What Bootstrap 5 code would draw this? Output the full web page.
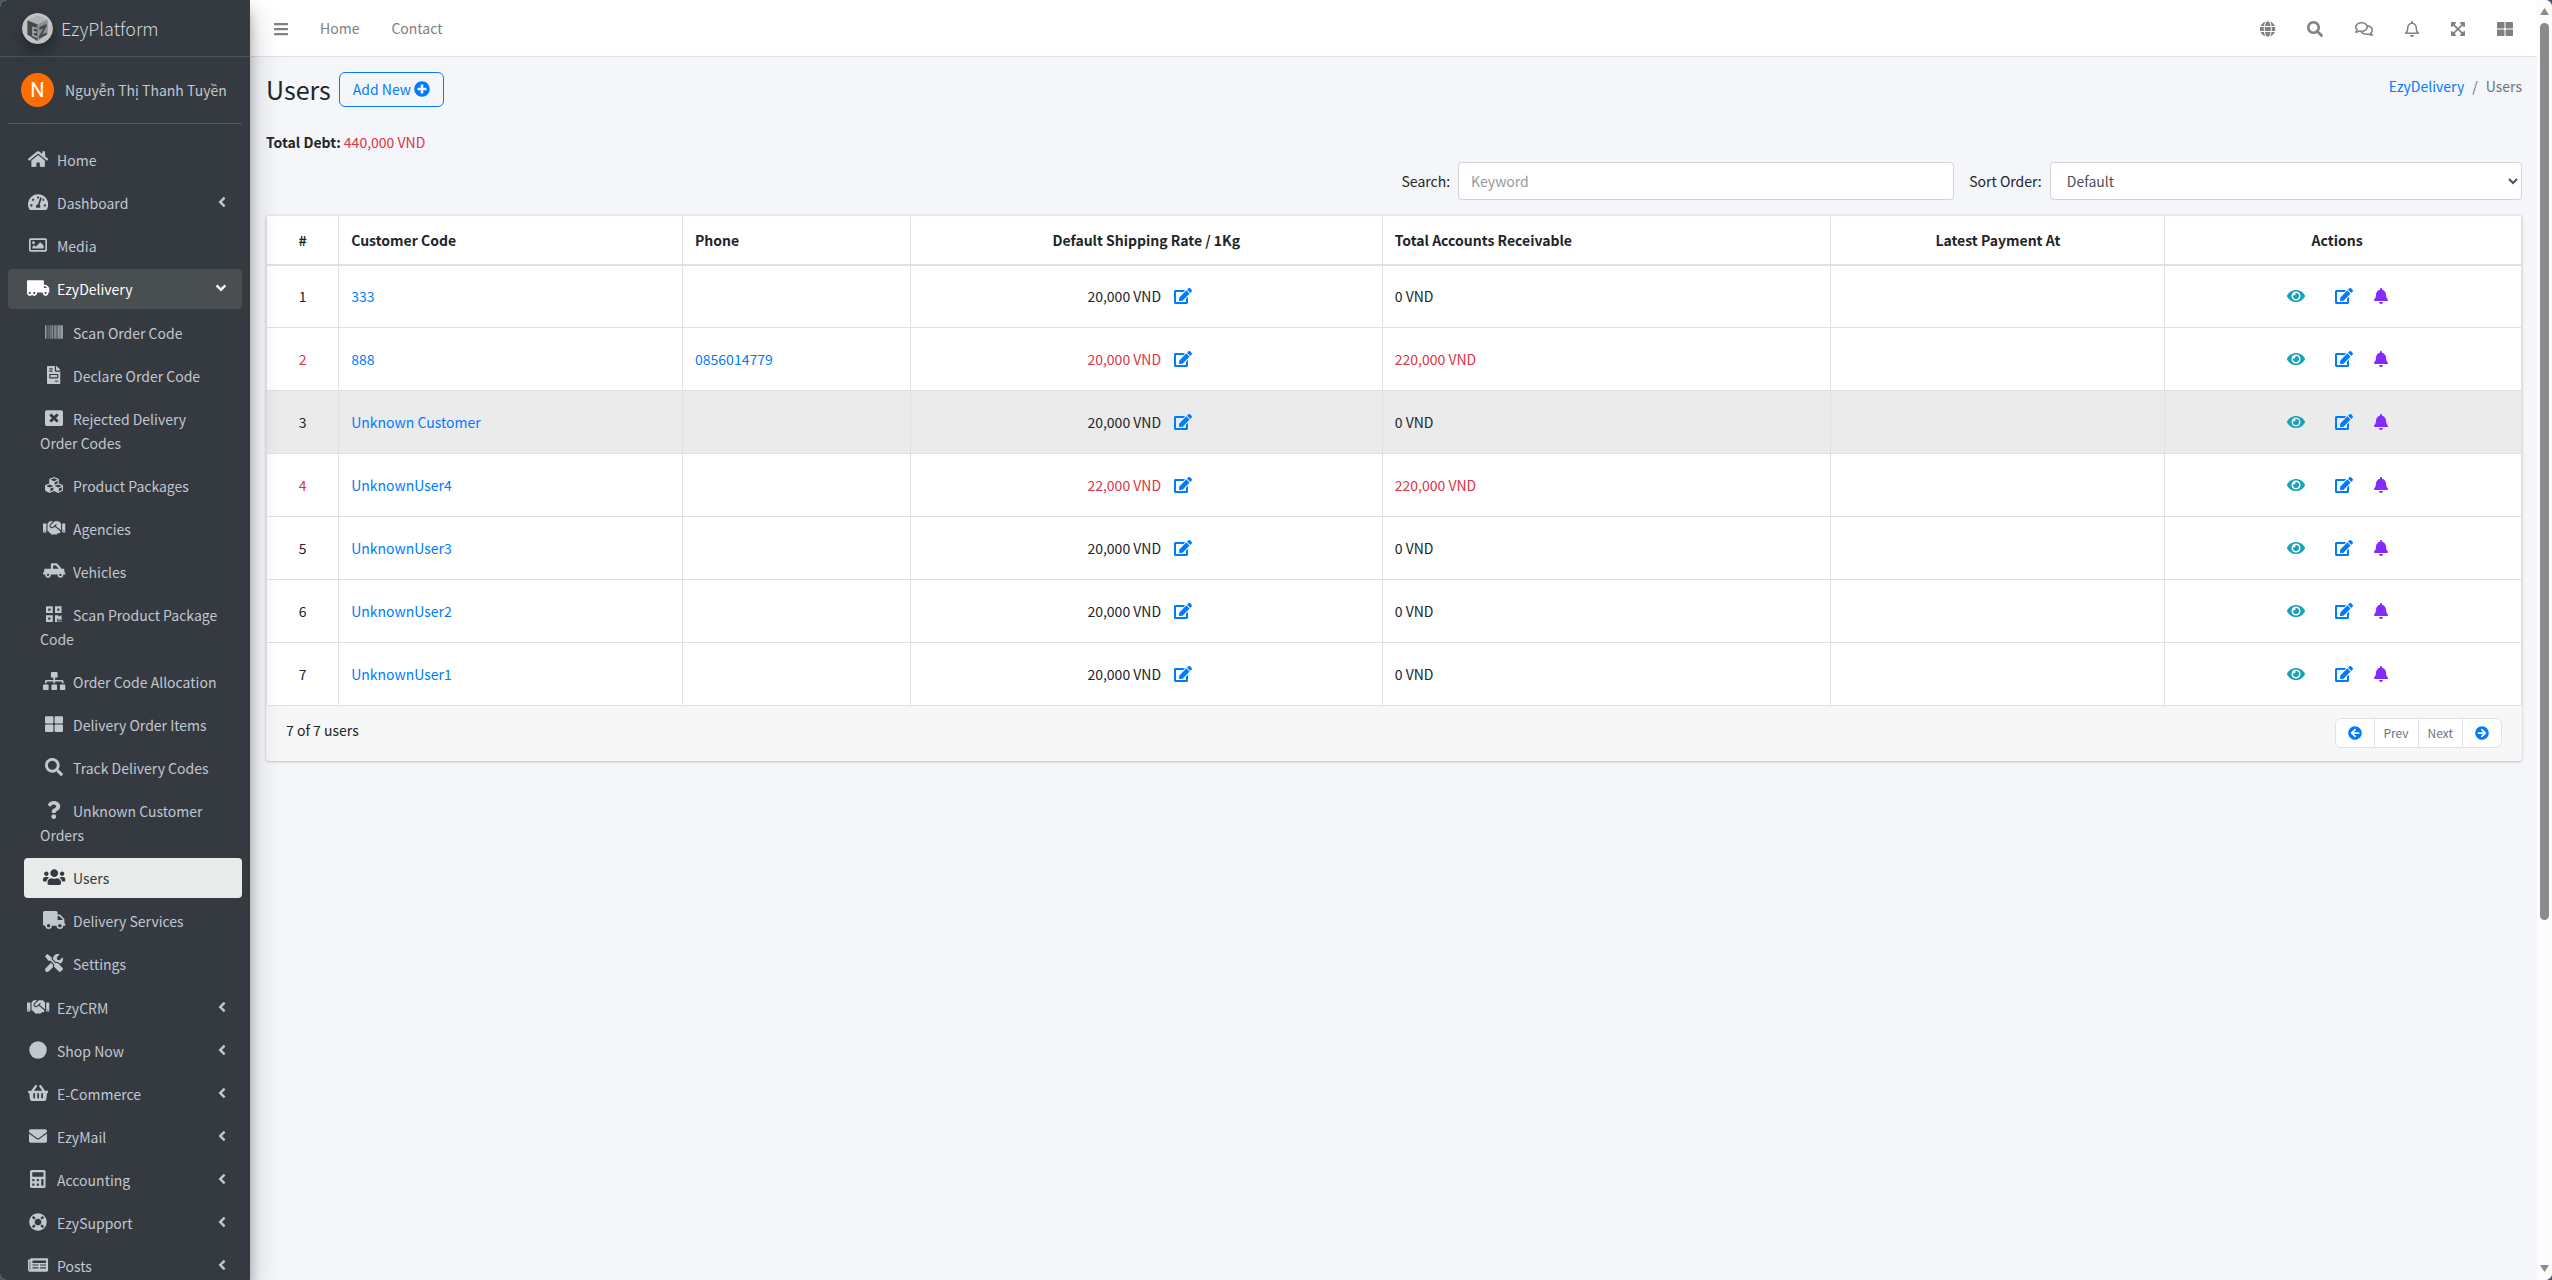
<!DOCTYPE html>
<html lang="en">
<head>
<meta charset="utf-8">
<meta name="viewport" content="width=device-width, initial-scale=1">
<title>EzyPlatform | Users</title>
<link href="https://cdn.jsdelivr.net/npm/bootstrap@5.3.0/dist/css/bootstrap.min.css" rel="stylesheet">
<style>
:root{--ezy-blue:#007bff;--ezy-red:#dc3545;--ezy-line:#dee2e6}
body{font-family:"Noto Sans CJK SC","Noto Sans",sans-serif;font-size:14px;line-height:24px;color:#212529;background:#44566c}
a{color:var(--ezy-blue);text-decoration:none}
.ico{fill:currentColor;height:16px;width:auto;overflow:visible;vertical-align:-2px}
.shell{background:#f4f6f9;border-radius:7px}
/* sidebar */
.side{width:250px;background:#343a40;color:#c2c7d0;z-index:5;box-shadow:0 14px 28px rgba(0,0,0,.25),0 10px 10px rgba(0,0,0,.22)}
.side a{color:#c2c7d0}
.side .brand-row{height:57px;border-bottom:1px solid #4b545c;font-size:18px;font-weight:300;padding:0 22px}
.side .brand-row a{color:#d0d4d9}
.brand-logo{width:31px;height:31px;border-radius:50%;margin-right:8px;box-shadow:0 8px 14px rgba(0,0,0,.3)}
.who{margin:0 8px;padding:16px 0 16px 13px;height:67px;border-bottom:1px solid #4f5962}
.avatar{width:33px;height:34px;border-radius:50%;background:#ff6d00;color:#fff;font:20px/34px Roboto,sans-serif;margin-right:11px}
.menu{padding:16px 8px 0}
.menu a{padding:8px 16px;margin-bottom:3px;border-radius:4px}
.menu .glyph{display:inline-block;width:26px;margin:0 6px 0 1px;text-align:center}
.menu .glyph .ico{height:18px;vertical-align:-2px}
.menu .arrow{height:16px;margin-bottom:2px}
.menu .opened{background:#494e51;color:#fff}
.menu .sub{padding:1px 0 1px 16px}
.menu .sub .chosen{background:#e9ebea;color:#343a40}
/* top bar */
.topbar{height:57px;background:#fff;border-bottom:1px solid var(--ezy-line);padding:0 8px}
.topbar a,.topbar button{color:#808080;padding:0 16px;background:none;border:0}
.topbar .ico{vertical-align:-3px}
/* content */
.page{padding:15px 15px 0 16px}
.page h1{font-size:25px;line-height:34px;font-weight:400;margin:0 8px 0 0}
.btn-add{color:var(--ezy-blue);border:1px solid var(--ezy-blue);padding:4px 13px;font-size:14px;line-height:25px;height:35px}
.crumbs{--bs-breadcrumb-divider-color:#6c757d;--bs-breadcrumb-item-active-color:#6c757d;padding-top:2px}
.debt{margin:23px 0 8px}
.red{color:var(--ezy-red)}
.filters{--bs-gutter-x:15px}
.filters .form-control,.filters select{height:38px;font-size:14px;line-height:24px;border:1px solid #ced4da;border-radius:4px;color:#495057;background-color:#fff}
.filters select{flex:1 1 0;min-width:0;padding:0 12px}
.filters .form-control::placeholder{color:#939ba2}
.panel{margin-top:15px;background:#fff;border-radius:4px;box-shadow:0 0 1px rgba(0,0,0,.125),0 1px 3px rgba(0,0,0,.2)}
.grid-users{table-layout:fixed;border-collapse:collapse;width:100%}
.grid-users th,.grid-users td{border:1px solid var(--ezy-line);padding:0 12px}
.grid-users tr>:last-child{padding-right:24px}
.grid-users thead th{height:49px;border-top-color:#e7e9ec;border-bottom:2px solid var(--ezy-line)}
.grid-users td{height:63px}
.grid-users .hovered td{background:#ebebeb}
.c1{width:3.2%}.c2{width:15.25%}.c3{width:10.1%}.c4{width:20.93%}.c5{width:19.9%}.c6{width:14.8%}
.act{background:none;border:0;padding:0 13px;color:var(--ezy-blue)}
.act-eye{color:#17a2b8;margin-right:4px}
.act-bell{color:#832bff;padding:0 13px 0 8px}
.foot{background:#f7f7f7;padding:12px 20px;height:55px;border-radius:0 0 4px 4px}
.pager .page-link{height:30px;padding:4px 9px;font-size:12px;line-height:20px;color:#6c757d;background:#fff;border:1px solid var(--ezy-line)}
.pager .page-link.end{padding:4px 12px;color:var(--ezy-blue)}
.pager .ico{height:14px;vertical-align:-2px}
/* window scroll bar */
.bar{width:15px;background:#fcfcfc;padding:8px 3px}
.bar svg{width:9px;height:7px;fill:#8b8b8b}
.thumb{width:9px;height:71%;margin:8px 0 auto;background:#8b8b8b;border-radius:5px}
</style>
</head>
<body>
<svg class="d-none" xmlns="http://www.w3.org/2000/svg">
<symbol id="home" viewBox="0 0 576 512"><path d="M280.370 148.260L96 300.110V464a16 16 0 0 0 16 16l112.060-.29a16 16 0 0 0 15.920-16V368a16 16 0 0 1 16-16h64a16 16 0 0 1 16 16v95.640a16 16 0 0 0 16 16.050L464 480a16 16 0 0 0 16-16V300L295.670 148.260a12.190 12.190 0 0 0-15.300 0zM571.600 251.470L488 182.560V44.050a12 12 0 0 0-12-12h-56a12 12 0 0 0-12 12v72.610L318.470 43a48 48 0 0 0-61 0L4.340 251.470a12 12 0 0 0-1.600 16.900l25.500 31A12 12 0 0 0 45.150 301l235.220-193.740a12.190 12.190 0 0 1 15.300 0L530.900 301a12 12 0 0 0 16.900-1.600l25.500-31a12 12 0 0 0-1.700-16.930z"/></symbol>
<symbol id="gauge" viewBox="0 0 576 512"><path d="M288 32C128.940 32 0 160.940 0 320c0 52.800 14.250 102.260 39.060 144.800 5.610 9.620 16.300 15.200 27.440 15.200h443c11.140 0 21.830-5.580 27.440-15.200C561.750 422.260 576 372.800 576 320c0-159.060-128.940-288-288-288zm0 64c14.710 0 26.580 10.130 30.320 23.650-1.110 2.260-2.640 4.230-3.450 6.670l-9.220 27.670c-5.130 3.490-10.970 6.010-17.640 6.010-17.670 0-32-14.330-32-32S270.330 96 288 96zM96 384c-17.670 0-32-14.330-32-32s14.330-32 32-32 32 14.330 32 32-14.330 32-32 32zm48-160c-17.670 0-32-14.330-32-32s14.330-32 32-32 32 14.330 32 32-14.330 32-32 32zm246.770-72.410l-61.330 184C343.130 347.330 352 364.540 352 384c0 11.720-3.380 22.550-8.880 32H232.880c-5.500-9.450-8.880-20.280-8.880-32 0-33.940 26.500-61.430 59.900-63.590l61.340-184.010c4.170-12.560 17.730-19.450 30.360-15.170 12.570 4.190 19.350 17.790 15.170 30.360zm14.660 57.200l15.520-46.550c3.470-1.290 7.130-2.230 11.050-2.230 17.670 0 32 14.330 32 32s-14.330 32-32 32c-11.380-.01-20.890-6.280-26.570-15.220zM480 384c-17.670 0-32-14.330-32-32s14.330-32 32-32 32 14.330 32 32-14.330 32-32 32z"/></symbol>
<symbol id="image" viewBox="0 0 512 512"><path d="M464 64H48C21.490 64 0 85.490 0 112v288c0 26.510 21.490 48 48 48h416c26.510 0 48-21.490 48-48V112c0-26.510-21.490-48-48-48zm-6 336H54a6 6 0 0 1-6-6V118a6 6 0 0 1 6-6h404a6 6 0 0 1 6 6v276a6 6 0 0 1-6 6zM128 152c-22.091 0-40 17.909-40 40s17.909 40 40 40 40-17.909 40-40-17.909-40-40-40zM96 352h320v-80l-87.515-87.515c-4.686-4.686-12.284-4.686-16.971 0L192 304l-39.515-39.515c-4.686-4.686-12.284-4.686-16.971 0L96 304v48z"/></symbol>
<symbol id="lorry" viewBox="0 0 640 512"><path fill-rule="evenodd" d="M621.300 237.300l-58.500-58.500c-12-12-28.300-18.700-45.300-18.700H480V64c0-17.700-14.300-32-32-32H32C14.300 32 0 46.300 0 64v336c0 44.200 35.800 80 80 80 26.300 0 49.400-12.900 64-32.400 14.600 19.600 37.700 32.400 64 32.400 44.200 0 80-35.800 80-80 0-5.500-.6-10.800-1.600-16h163.200c-1.100 5.200-1.600 10.500-1.600 16 0 44.200 35.800 80 80 80s80-35.800 80-80c0-5.500-.6-10.800-1.600-16H624c8.800 0 16-7.200 16-16v-85.500c0-17-6.700-33.200-18.700-45.200zM80 432c-17.600 0-32-14.400-32-32s14.400-32 32-32 32 14.400 32 32-14.400 32-32 32zm128 0c-17.600 0-32-14.400-32-32s14.400-32 32-32 32 14.400 32 32-14.400 32-32 32zm272-224h37.500c4.300 0 8.300 1.700 11.300 4.700l43.300 43.300H480v-48zm48 224c-17.600 0-32-14.400-32-32s14.400-32 32-32 32 14.400 32 32-14.400 32-32 32z"/></symbol>
<symbol id="truck" viewBox="0 0 640 512"><path d="M624 352h-16V243.900c0-12.700-5.100-24.900-14.100-33.900L494 110.100c-9-9-21.200-14.100-33.900-14.100H416V48c0-26.500-21.500-48-48-48H48C21.500 0 0 21.500 0 48v320c0 26.500 21.500 48 48 48h16c0 53 43 96 96 96s96-43 96-96h128c0 53 43 96 96 96s96-43 96-96h48c8.800 0 16-7.200 16-16v-32c0-8.800-7.200-16-16-16zM160 464c-26.500 0-48-21.500-48-48s21.500-48 48-48 48 21.500 48 48-21.500 48-48 48zm320 0c-26.500 0-48-21.500-48-48s21.500-48 48-48 48 21.500 48 48-21.500 48-48 48zm80-208H416V144h44.100l99.900 99.900V256z"/></symbol>
<symbol id="barcode" viewBox="0 0 512 512"><path d="M0 448V64h18v384H0zm26.857-.273V64H36v383.727h-9.143zm27.143 0V64h8.857v383.727H54zm44.857 0V64h8.857v383.727h-8.857zm36 0V64h17.714v383.727h-17.714zm44.857 0V64h8.857v383.727h-8.857zm18 0V64h8.857v383.727h-8.857zm18 0V64h8.857v383.727h-8.857zm35.715 0V64h18v383.727h-18zm44.857 0V64h18v383.727h-18zm35.999 0V64h18.001v383.727h-18.001zm36.001 0V64h18.001v383.727h-18.001zm26.857 0V64h18v383.727h-18zm45.143 0V64h26.857v383.727h-26.857zm35.714 0V64h9.143v383.727H476zm18 .273V64h18v384h-18z"/></symbol>
<symbol id="invoice" viewBox="0 0 384 512"><path d="M288 256H96v64h192v-64zm89-151L279.100 7c-4.500-4.500-10.600-7-17-7H256v128h128v-6.100c0-6.300-2.500-12.400-7-16.900zm-153 31V0H24C10.700 0 0 10.700 0 24v464c0 13.300 10.700 24 24 24h336c13.300 0 24-10.700 24-24V160H248c-13.200 0-24-10.800-24-24zM64 72c0-4.420 3.580-8 8-8h80c4.420 0 8 3.580 8 8v16c0 4.420-3.580 8-8 8H72c-4.420 0-8-3.580-8-8V72zm0 64c0-4.420 3.580-8 8-8h80c4.420 0 8 3.580 8 8v16c0 4.420-3.580 8-8 8H72c-4.420 0-8-3.580-8-8v-16zm256 304c0 4.420-3.580 8-8 8h-80c-4.420 0-8-3.580-8-8v-16c0-4.420 3.580-8 8-8h80c4.420 0 8 3.580 8 8v16zm0-200v96c0 8.840-7.160 16-16 16H80c-8.840 0-16-7.160-16-16v-96c0-8.840 7.160-16 16-16h224c8.840 0 16 7.160 16 16z"/></symbol>
<symbol id="reject" viewBox="0 0 512 512"><path d="M464 32H48C21.500 32 0 53.500 0 80v352c0 26.500 21.500 48 48 48h416c26.500 0 48-21.500 48-48V80c0-26.500-21.500-48-48-48zm-83.600 290.500c4.800 4.800 4.800 12.600 0 17.400l-40.500 40.500c-4.800 4.800-12.600 4.800-17.400 0L256 313.300l-66.500 67.100c-4.800 4.800-12.600 4.800-17.400 0l-40.500-40.500c-4.800-4.800-4.800-12.600 0-17.400l67.100-66.500-67.100-66.500c-4.800-4.800-4.800-12.600 0-17.400l40.500-40.500c4.800-4.800 12.600-4.800 17.400 0l66.500 67.100 66.500-67.100c4.800-4.800 12.600-4.800 17.400 0l40.500 40.500c4.800 4.800 4.800 12.600 0 17.400L313.300 256l67.100 66.500z"/></symbol>
<symbol id="cubes" viewBox="0 0 512 512"><path d="M488.600 250.200L392 214V105.500c0-15-9.300-28.400-23.400-33.700l-100-37.500c-8.100-3.100-17.100-3.100-25.300 0l-100 37.500c-14.100 5.300-23.400 18.700-23.400 33.700V214l-96.600 36.200C9.300 255.500 0 268.900 0 283.900V394c0 13.600 7.700 26.100 19.900 32.200l100 50c10.100 5.100 22.100 5.100 32.200 0l103.900-52 103.900 52c10.100 5.100 22.100 5.100 32.200 0l100-50c12.200-6.100 19.900-18.600 19.900-32.200V283.900c0-15-9.300-28.400-23.400-33.700zM358 214.800l-85 31.900v-68.200l85-37v73.300zM154 104.100l102-38.200 102 38.200v.6l-102 41.400-102-41.400v-.6zm84 291.100l-85 42.500v-79.100l85-38.800v75.400zm0-112l-102 41.400-102-41.400v-.6l102-38.200 102 38.200v.6zm240 112l-85 42.500v-79.100l85-38.800v75.400zm0-112l-102 41.400-102-41.400v-.6l102-38.200 102 38.200v.6z"/></symbol>
<symbol id="shake" viewBox="0 0 640 512"><path d="M434.700 64h-85.900c-8 0-15.700 3-21.600 8.400l-98.300 90c-.1.100-.2.300-.3.400-16.600 15.600-16.300 40.500-2.100 56 12.700 13.900 39.400 17.600 56.100 2.700.1-.1.300-.1.400-.2l79.900-73.200c6.500-5.900 16.700-5.500 22.600 1 6 6.500 5.500 16.600-1 22.600l-26.100 23.900L504 313.800c2.900 2.400 5.500 5 7.900 7.700V128l-54.600-54.600c-5.900-6-14.100-9.400-22.600-9.400zM544 128.200v223.900c0 17.700 14.300 32 32 32h64V128.200h-96zm48 223.900c-8.800 0-16-7.200-16-16s7.200-16 16-16 16 7.200 16 16-7.200 16-16 16zM0 384h64c17.700 0 32-14.300 32-32V128.200H0V384zm48-63.900c8.800 0 16 7.200 16 16s-7.200 16-16 16-16-7.200-16-16c0-8.900 7.200-16 16-16zm435.900 18.600L334.600 217.500l-30 27.500c-29.700 27.100-75.200 24.500-101.700-4.400-26.900-29.400-24.800-74.900 4.400-101.700L289.100 64h-83.800c-8.500 0-16.600 3.400-22.600 9.400L128 128v223.900h18.300l90.500 81.900c27.400 22.300 67.700 18.100 90-9.300l.2-.2 17.900 15.500c15.900 13 39.400 10.500 52.300-5.400l31.400-38.600 5.400 4.400c13.700 11.100 33.900 9.100 45-4.700l9.500-11.700c11.200-13.800 9.100-33.900-4.600-45.100z"/></symbol>
<symbol id="pickup" viewBox="0 0 640 512"><path d="M624 288h-16v-64c0-17.700-14.300-32-32-32h-48L419.200 56c-12.100-15.200-30.500-24-50-24H256c-17.700 0-32 14.300-32 32v128H64c-17.700 0-32 14.300-32 32v64H16c-8.800 0-16 7.200-16 16v32c0 8.800 7.200 16 16 16h49.600c-1 5.200-1.600 10.500-1.600 16 0 44.200 35.800 80 80 80s80-35.800 80-80c0-5.500-.6-10.800-1.600-16h195.200c-1 5.200-1.600 10.500-1.600 16 0 44.200 35.800 80 80 80s80-35.800 80-80c0-5.500-.6-10.800-1.600-16H624c8.800 0 16-7.200 16-16v-32c0-8.800-7.200-16-16-16zM288 96h81.200l76.800 96H288V96zM144 400c-17.600 0-32-14.400-32-32s14.400-32 32-32 32 14.400 32 32-14.400 32-32 32zm352 0c-17.600 0-32-14.400-32-32s14.400-32 32-32 32 14.400 32 32-14.400 32-32 32z"/></symbol>
<symbol id="qr" viewBox="0 0 448 512"><path d="M0 224h192V32H0v192zM64 96h64v64H64V96zm192-64v192h192V32H256zm128 128h-64V96h64v64zM0 480h192V288H0v192zm64-128h64v64H64v-64zm352-64h32v128h-96v-32h-32v96h-64V288h96v32h64v-32zm0 160h32v32h-32v-32zm-64 0h32v32h-32v-32z"/></symbol>
<symbol id="sitemap" viewBox="0 0 640 512"><path d="M128 352H32c-17.700 0-32 14.300-32 32v96c0 17.700 14.300 32 32 32h96c17.700 0 32-14.300 32-32v-96c0-17.700-14.300-32-32-32zm-24-80h192v48h48v-48h192v48h48v-57.600c0-21.200-17.200-38.400-38.400-38.400H344v-64h40c17.700 0 32-14.300 32-32V32c0-17.700-14.300-32-32-32H256c-17.700 0-32 14.300-32 32v96c0 17.700 14.300 32 32 32h40v64H94.400C73.200 224 56 241.200 56 262.400V320h48v-48zm264 80h-96c-17.700 0-32 14.300-32 32v96c0 17.700 14.300 32 32 32h96c17.700 0 32-14.300 32-32v-96c0-17.700-14.300-32-32-32zm240 0h-96c-17.700 0-32 14.300-32 32v96c0 17.700 14.300 32 32 32h96c17.700 0 32-14.300 32-32v-96c0-17.700-14.300-32-32-32z"/></symbol>
<symbol id="tiles" viewBox="0 0 512 512"><path d="M296 32h192c13.255 0 24 10.745 24 24v160c0 13.255-10.745 24-24 24H296c-13.255 0-24-10.745-24-24V56c0-13.255 10.745-24 24-24zm-80 0H24C10.745 32 0 42.745 0 56v160c0 13.255 10.745 24 24 24h192c13.255 0 24-10.745 24-24V56c0-13.255-10.745-24-24-24zM0 296v160c0 13.255 10.745 24 24 24h192c13.255 0 24-10.745 24-24V296c0-13.255-10.745-24-24-24H24c-13.255 0-24 10.745-24 24zm296 184h192c13.255 0 24-10.745 24-24V296c0-13.255-10.745-24-24-24H296c-13.255 0-24 10.745-24 24v160c0 13.255 10.745 24 24 24z"/></symbol>
<symbol id="search" viewBox="0 0 512 512"><path d="M505 442.700L405.300 343c-4.500-4.500-10.600-7-17-7H372c27.600-35.300 44-79.700 44-128C416 93.100 322.900 0 208 0S0 93.100 0 208s93.100 208 208 208c48.300 0 92.700-16.400 128-44v16.300c0 6.400 2.500 12.500 7 17l99.700 99.700c9.400 9.400 24.600 9.400 33.900 0l28.300-28.300c9.400-9.400 9.400-24.600.1-34zM208 336c-70.700 0-128-57.200-128-128 0-70.700 57.200-128 128-128 70.700 0 128 57.200 128 128 0 70.700-57.200 128-128 128z"/></symbol>
<symbol id="question" viewBox="0 0 384 512"><path d="M202.021 0C122.202 0 70.503 32.703 29.914 91.026c-7.363 10.580-5.093 25.086 5.178 32.874l43.138 32.709c10.373 7.865 25.132 6.026 33.253-4.148 25.049-31.381 43.630-49.449 82.757-49.449 30.764 0 68.816 19.799 68.816 49.631 0 22.552-18.617 34.134-48.993 51.164-35.423 19.860-82.299 44.576-82.299 106.405V320c0 13.255 10.745 24 24 24h72.471c13.255 0 24-10.745 24-24v-5.773c0-42.860 125.268-44.645 125.268-160.627C377.504 66.256 286.902 0 202.021 0zM192 373.459c-38.196 0-69.271 31.075-69.271 69.271 0 38.195 31.075 69.270 69.271 69.270s69.271-31.075 69.271-69.271-31.075-69.270-69.271-69.270z"/></symbol>
<symbol id="users" viewBox="0 0 640 512"><path d="M96 224c35.300 0 64-28.700 64-64s-28.700-64-64-64-64 28.700-64 64 28.700 64 64 64zm448 0c35.300 0 64-28.700 64-64s-28.700-64-64-64-64 28.700-64 64 28.700 64 64 64zm32 32h-64c-17.600 0-33.500 7.100-45.100 18.600 40.300 22.100 68.900 62 75.100 109.400h66c17.700 0 32-14.300 32-32v-32c0-35.300-28.700-64-64-64zm-256 0c61.900 0 112-50.100 112-112S381.900 32 320 32 208 82.100 208 144s50.100 112 112 112zm76.800 32h-8.300c-20.800 10-43.900 16-68.500 16s-47.600-6-68.500-16h-8.300C179.600 288 128 339.600 128 403.200V432c0 26.500 21.500 48 48 48h288c26.500 0 48-21.500 48-48v-28.800c0-63.600-51.600-115.200-115.200-115.200zm-223.700-13.400C161.500 263.100 145.600 256 128 256H64c-35.300 0-64 28.700-64 64v32c0 17.700 14.300 32 32 32h65.900c6.300-47.400 34.900-87.300 75.200-109.400z"/></symbol>
<symbol id="tools" viewBox="0 0 512 512"><path d="M501.100 395.700L384 278.600c-23.100-23.100-57.600-27.600-85.400-13.900L192 158.100V96L64 0 0 64l96 128h62.100l106.600 106.600c-13.600 27.800-9.200 62.300 13.900 85.400l117.100 117.100c14.600 14.600 38.200 14.600 52.700 0l52.700-52.700c14.500-14.600 14.500-38.200 0-52.700zM331.700 225c28.300 0 54.900 11 74.900 31l19.400 19.400c15.800-6.900 30.800-16.500 43.800-29.500 37.100-37.100 49.700-89.300 37.900-136.700-2.200-9-13.500-12.100-20.100-5.500l-74.400 74.400-67.900-11.300L334 98.900l74.400-74.400c6.600-6.600 3.400-17.900-5.700-20.200-47.400-11.700-99.600.9-136.600 37.900-28.500 28.500-41.900 66.100-41.200 103.600l82.100 82.100c8.100-1.900 16.500-2.900 24.700-2.900zm-103.900 82l-56.700-56.700L18.700 402.800c-25 25-25 65.500 0 90.500s65.500 25 90.500 0l123.600-123.600c-7.600-19.900-9.900-41.600-5-62.700z"/></symbol>
<symbol id="dot" viewBox="0 0 512 512"><circle cx="256" cy="256" r="248"/></symbol>
<symbol id="basket" viewBox="0 0 576 512"><path d="M576 216v16c0 13.255-10.745 24-24 24h-8l-26.113 182.788C514.509 462.435 494.257 480 470.370 480H105.630c-23.887 0-44.139-17.565-47.518-41.212L32 256h-8c-13.255 0-24-10.745-24-24v-16c0-13.255 10.745-24 24-24h67.341l106.780-146.821c10.395-14.292 30.407-17.453 44.701-7.058 14.293 10.395 17.453 30.408 7.058 44.701L170.477 192h235.046L326.120 82.821c-10.395-14.292-7.234-34.306 7.059-44.701 14.291-10.395 34.306-7.235 44.701 7.058L484.659 192H552c13.255 0 24 10.745 24 24zM312 392V280c0-13.255-10.745-24-24-24s-24 10.745-24 24v112c0 13.255 10.745 24 24 24s24-10.745 24-24zm112 0V280c0-13.255-10.745-24-24-24s-24 10.745-24 24v112c0 13.255 10.745 24 24 24s24-10.745 24-24zm-224 0V280c0-13.255-10.745-24-24-24s-24 10.745-24 24v112c0 13.255 10.745 24 24 24s24-10.745 24-24z"/></symbol>
<symbol id="mail" viewBox="0 0 512 512"><path d="M502.300 190.800c3.900-3.100 9.700-.2 9.700 4.700V400c0 26.500-21.500 48-48 48H48c-26.500 0-48-21.500-48-48V195.600c0-5 5.700-7.800 9.700-4.700 22.400 17.400 52.100 39.500 154.100 113.600 21.100 15.400 56.700 47.800 92.200 47.600 35.700.3 72-32.800 92.300-47.600 102-74.100 131.600-96.300 154-113.700zM256 320c23.200.4 56.600-29.200 73.400-41.400 132.700-96.300 142.800-104.700 173.400-128.700 5.800-4.500 9.200-11.500 9.200-18.900v-19c0-26.500-21.500-48-48-48H48c-26.500 0-48 21.500-48 48v19c0 7.400 3.400 14.300 9.200 18.900 30.600 23.900 40.700 32.400 173.400 128.700 16.800 12.200 50.200 41.800 73.400 41.400z"/></symbol>
<symbol id="calc" viewBox="0 0 448 512"><path d="M400 0H48C22.400 0 0 22.400 0 48v416c0 25.600 22.400 48 48 48h352c25.600 0 48-22.400 48-48V48c0-25.600-22.400-48-48-48zM128 435.200c0 6.400-6.400 12.800-12.800 12.800H76.800c-6.400 0-12.800-6.400-12.800-12.800v-38.400c0-6.400 6.400-12.800 12.800-12.800h38.400c6.400 0 12.800 6.400 12.800 12.800v38.400zm0-128c0 6.400-6.400 12.800-12.800 12.800H76.800c-6.400 0-12.800-6.400-12.800-12.800v-38.400c0-6.400 6.400-12.800 12.800-12.800h38.400c6.400 0 12.800 6.400 12.800 12.800v38.400zm128 128c0 6.400-6.400 12.800-12.800 12.800h-38.400c-6.400 0-12.800-6.400-12.800-12.800v-38.400c0-6.400 6.400-12.800 12.800-12.800h38.400c6.400 0 12.800 6.400 12.800 12.800v38.400zm0-128c0 6.400-6.400 12.800-12.800 12.800h-38.400c-6.400 0-12.800-6.400-12.800-12.800v-38.400c0-6.400 6.400-12.800 12.800-12.800h38.400c6.400 0 12.800 6.400 12.800 12.800v38.400zm128 128c0 6.400-6.400 12.800-12.800 12.800h-38.400c-6.400 0-12.800-6.400-12.800-12.800V268.800c0-6.400 6.400-12.800 12.800-12.800h38.400c6.400 0 12.800 6.400 12.800 12.800v166.400zm0-256c0 6.400-6.400 12.800-12.800 12.800H76.800c-6.400 0-12.800-6.400-12.800-12.800V76.800C64 70.400 70.400 64 76.800 64h294.400c6.400 0 12.800 6.400 12.800 12.800v102.400z"/></symbol>
<symbol id="ring" viewBox="0 0 512 512"><path d="M256 8C119.033 8 8 119.033 8 256s111.033 248 248 248 248-111.033 248-248S392.967 8 256 8zm173.696 119.559l-63.399 63.399c-10.987-18.559-26.670-34.252-45.255-45.255l63.399-63.399a218.396 218.396 0 0 1 45.255 45.255zM256 352c-53.019 0-96-42.981-96-96s42.981-96 96-96 96 42.981 96 96-42.981 96-96 96zM127.559 82.304l63.399 63.399c-18.559 10.987-34.252 26.670-45.255 45.255l-63.399-63.399a218.372 218.372 0 0 1 45.255-45.255zM82.304 384.441l63.399-63.399c10.987 18.559 26.670 34.252 45.255 45.255l-63.399 63.399a218.396 218.396 0 0 1-45.255-45.255zm302.137 45.255l-63.399-63.399c18.559-10.987 34.252-26.670 45.255-45.255l63.399 63.399a218.403 218.403 0 0 1-45.255 45.255z"/></symbol>
<symbol id="news" viewBox="0 0 576 512"><path fill-rule="evenodd" d="M552 64H88c-13.300 0-24 10.700-24 24v8H24c-13.300 0-24 10.700-24 24v272c0 30.900 25.100 56 56 56h472c26.500 0 48-21.500 48-48V88c0-13.300-10.700-24-24-24zM56 400a8 8 0 0 1-8-8V144h16v248a8 8 0 0 1-8 8zM128 128h384v72H128zM128 240h168v32H128zM344 240h168v32H344zM128 320h168v32H128zM344 320h168v32H344z"/></symbol>
<symbol id="left" viewBox="0 0 256 512"><path d="M31.700 239l136-136c9.400-9.400 24.600-9.400 33.900 0l22.600 22.600c9.400 9.400 9.400 24.600 0 33.900L127.900 256l96.400 96.400c9.400 9.400 9.400 24.600 0 33.900L201.700 409c-9.400 9.400-24.600 9.400-33.900 0l-136-136c-9.500-9.400-9.500-24.600-.1-34z"/></symbol>
<symbol id="down" viewBox="0 0 320 512"><path d="M143 352.300L7 216.300c-9.400-9.400-9.400-24.600 0-33.900l22.600-22.600c9.400-9.400 24.600-9.400 33.900 0l96.400 96.400 96.400-96.400c9.400-9.400 24.600-9.400 33.900 0l22.600 22.600c9.400 9.400 9.400 24.600 0 33.900l-136 136c-9.200 9.400-24.400 9.400-33.800 0z"/></symbol>
<symbol id="bars" viewBox="0 0 448 512"><path d="M16 132h416c8.837 0 16-7.163 16-16V76c0-8.837-7.163-16-16-16H16C7.163 60 0 67.163 0 76v40c0 8.837 7.163 16 16 16zm0 160h416c8.837 0 16-7.163 16-16v-40c0-8.837-7.163-16-16-16H16c-8.837 0-16 7.163-16 16v40c0 8.837 7.163 16 16 16zm0 160h416c8.837 0 16-7.163 16-16v-40c0-8.837-7.163-16-16-16H16c-8.837 0-16 7.163-16 16v40c0 8.837 7.163 16 16 16z"/></symbol>
<symbol id="globe" viewBox="0 0 496 512"><path d="M336.500 160C322 70.700 287.800 8 248 8s-74 62.700-88.500 152h177zM152 256c0 22.200 1.200 43.500 3.300 64h185.300c2.100-20.500 3.300-41.800 3.300-64s-1.200-43.500-3.300-64H155.300c-2.100 20.500-3.300 41.800-3.300 64zm324.700-96c-28.600-67.900-86.500-120.400-158-141.600 24.400 33.800 41.200 84.700 50 141.600h108zM177.200 18.400C105.800 39.600 47.800 92.100 19.300 160h108c8.700-56.900 25.500-107.800 49.900-141.600zM487.400 192H372.700c2.100 21 3.300 42.500 3.300 64s-1.200 43-3.300 64h114.600c5.500-20.500 8.600-41.800 8.600-64s-3.100-43.500-8.500-64zM120 256c0-21.500 1.200-43 3.300-64H8.600C3.200 212.500 0 233.800 0 256s3.200 43.500 8.600 64h114.600c-2-21-3.200-42.500-3.200-64zm39.500 96c14.500 89.300 48.700 152 88.500 152s74-62.700 88.500-152h-177zm159.300 141.600c71.400-21.200 129.400-73.700 158-141.600h-108c-8.800 56.900-25.600 107.800-50 141.600zM19.300 352c28.600 67.900 86.500 120.400 158 141.600-24.400-33.800-41.200-84.700-50-141.600h-108z"/></symbol>
<symbol id="chat" viewBox="0 0 576 512"><path d="M532 386.200c27.500-27.100 44-61.100 44-98.200 0-80-76.500-146.100-176.200-157.900C368.300 72.500 294.300 32 208 32 93.100 32 0 103.600 0 192c0 37 16.500 71 44 98.200-15.300 30.700-37.300 54.500-37.700 54.900-6.300 6.700-8.100 16.500-4.400 25 3.600 8.500 12 14 21.200 14 53.500 0 96.700-20.200 125.200-38.800 9.200 2.100 18.700 3.700 28.400 4.900C208.100 407.600 281.800 448 368 448c20.800 0 40.800-2.400 59.800-6.800C456.300 459.700 499.400 480 553 480c9.200 0 17.500-5.500 21.200-14 3.600-8.500 1.900-18.300-4.400-25-.4-.3-22.500-24.100-37.800-54.800zm-392.800-92.300L122.100 305c-14.100 9.100-28.500 16.300-43.100 21.400 2.700-4.700 5.400-9.700 8-14.800l15.500-31.100L77.700 256C64.200 242.600 48 220.700 48 192c0-60.700 73.300-112 160-112s160 51.300 160 112-73.300 112-160 112c-16.500 0-33-1.900-49-5.600l-19.800-4.500zM498.300 352l-24.700 24.400 15.500 31.100c2.600 5.100 5.300 10.100 8 14.800-14.600-5.100-29-12.300-43.100-21.400l-17.100-11.100-19.900 4.600c-16 3.700-32.500 5.600-49 5.600-54 0-102.200-20.100-131.300-49.700C338 339.500 416 272.900 416 192c0-3.400-.4-6.700-.7-10C479.700 196.500 528 238.800 528 288c0 28.700-16.200 50.600-29.700 64z"/></symbol>
<symbol id="bell-o" viewBox="0 0 448 512"><path d="M439.390 362.290c-19.320-20.760-55.470-51.990-55.470-154.290 0-77.700-54.480-139.900-127.940-155.160V32c0-17.670-14.320-32-31.980-32s-31.980 14.330-31.980 32v20.840C118.560 68.100 64.080 130.300 64.080 208c0 102.300-36.150 133.530-55.470 154.290-6 6.450-8.660 14.160-8.610 21.710.11 16.400 12.980 32 32.100 32h383.800c19.120 0 32-15.600 32.100-32 .05-7.550-2.610-15.270-8.610-21.710zM67.530 368c21.220-27.970 44.420-74.330 44.530-159.420 0-.2-.06-.38-.06-.58 0-61.860 50.140-112 112-112s112 50.140 112 112c0 .2-.06.380-.06.580.11 85.100 23.310 131.460 44.530 159.420H67.530zM224 512c35.320 0 63.970-28.650 63.970-64H160.030c0 35.350 28.650 64 63.970 64z"/></symbol>
<symbol id="bell" viewBox="0 0 448 512"><path d="M224 512c35.320 0 63.970-28.650 63.970-64H160.030c0 35.350 28.650 64 63.970 64zm215.390-149.710c-19.320-20.760-55.470-51.990-55.470-154.290 0-77.700-54.480-139.900-127.940-155.160V32c0-17.670-14.320-32-31.980-32s-31.980 14.330-31.980 32v20.840C118.560 68.100 64.080 130.300 64.080 208c0 102.300-36.150 133.530-55.470 154.290-6 6.450-8.660 14.160-8.610 21.710.11 16.400 12.980 32 32.100 32h383.800c19.120 0 32-15.600 32.100-32 .05-7.550-2.610-15.270-8.610-21.710z"/></symbol>
<symbol id="expand" viewBox="0 0 448 512"><path d="M448 344v112a23.940 23.940 0 0 1-24 24H312c-21.390 0-32.090-25.900-17-41l36.200-36.200L224 295.600 116.770 402.900 153 439c15.090 15.100 4.390 41-17 41H24a23.940 23.940 0 0 1-24-24V344c0-21.400 25.890-32.100 41-17l36.190 36.200L184.460 256 77.180 148.700 41 185c-15.100 15.100-41 4.400-41-17V56a23.940 23.940 0 0 1 24-24h112c21.390 0 32.090 25.900 17 41l-36.200 36.200L224 216.400l107.230-107.300L295 73c-15.090-15.100-4.390-41 17-41h112a23.940 23.940 0 0 1 24 24v112c0 21.400-25.890 32.100-41 17l-36.190-36.200L263.540 256l107.280 107.300L407 327.100c15.100-15.200 41-4.500 41 16.900z"/></symbol>
<symbol id="plus" viewBox="0 0 512 512"><path d="M256 8C119 8 8 119 8 256s111 248 248 248 248-111 248-248S393 8 256 8zm144 276c0 6.600-5.400 12-12 12h-92v92c0 6.600-5.400 12-12 12h-56c-6.600 0-12-5.400-12-12v-92h-92c-6.600 0-12-5.400-12-12v-56c0-6.600 5.400-12 12-12h92v-92c0-6.600 5.400-12 12-12h56c6.600 0 12 5.400 12 12v92h92c6.600 0 12 5.400 12 12v56z"/></symbol>
<symbol id="edit" viewBox="0 0 576 512"><path d="M402.600 83.200l90.200 90.200c3.800 3.800 3.800 10 0 13.800L274.400 405.600l-92.800 10.300c-12.400 1.400-22.900-9.100-21.500-21.500l10.300-92.800L388.800 83.200c3.800-3.800 10-3.800 13.800 0zm162-22.900l-48.800-48.800c-15.200-15.200-39.900-15.200-55.200 0l-35.400 35.400c-3.800 3.800-3.800 10 0 13.800l90.200 90.200c3.800 3.800 10 3.800 13.800 0l35.400-35.400c15.200-15.300 15.200-40 0-55.200zM384 346.200V448H64V128h229.800c3.200 0 6.200-1.300 8.500-3.500l40-40c7.600-7.600 2.200-20.500-8.500-20.500H48C21.500 64 0 85.500 0 112v352c0 26.500 21.500 48 48 48h352c26.500 0 48-21.500 48-48V306.200c0-10.700-12.900-16-20.500-8.500l-40 40c-2.200 2.300-3.500 5.300-3.500 8.500z"/></symbol>
<symbol id="eye" viewBox="0 0 576 512"><path d="M572.520 241.400C518.290 135.590 410.930 64 288 64S57.680 135.640 3.480 241.410a32.350 32.350 0 0 0 0 29.190C57.710 376.410 165.070 448 288 448s230.320-71.640 284.520-177.410a32.350 32.350 0 0 0 0-29.190zM288 400a144 144 0 1 1 144-144 143.930 143.930 0 0 1-144 144zm0-240a95.310 95.310 0 0 0-25.310 3.790 47.850 47.850 0 0 1-66.900 66.900A95.780 95.780 0 1 0 288 160z"/></symbol>
<symbol id="go-left" viewBox="0 0 512 512"><path d="M256 504C119 504 8 393 8 256S119 8 256 8s248 111 248 248-111 248-248 248zm28.900-143.600L209.400 288H392c13.300 0 24-10.700 24-24v-16c0-13.300-10.700-24-24-24H209.400l75.500-72.400c9.700-9.300 9.900-24.800.4-34.300l-11-10.900c-9.400-9.400-24.600-9.400-33.900 0L107.700 239c-9.400 9.400-9.400 24.600 0 33.900l132.700 132.700c9.400 9.400 24.600 9.400 33.900 0l11-10.900c9.500-9.500 9.300-25-.4-34.300z"/></symbol>
</svg>

<div class="shell d-flex vh-100 overflow-hidden">
<aside class="side flex-shrink-0 position-relative">
  <div class="brand-row d-flex align-items-center">
    <a href="#" class="d-flex align-items-center">
      <svg class="brand-logo" viewBox="0 0 62 62" aria-hidden="true"><circle cx="31" cy="31" r="31" fill="#c0c2c3"/><path d="M31 6 51 14v28L31 56 11 43V15z" fill="#8b8e90"/><path d="M31 6 51 14 31 23 11 15z" fill="#b0b3b4"/><path d="M11 15 31 23v33L11 43z" fill="#45494c"/><path d="M31 23 51 14v28L31 56z" fill="#8d9092"/><path d="M35 28 49 22v5L40 43l9-4v5l-15 7v-5l9-15-8 3z" fill="#45494c"/><path d="M30 31l-8-2v16l8 3m-8-11 7 2" fill="none" stroke="#a7aaac" stroke-width="3"/></svg>
      <span>EzyPlatform</span></a>
  </div>
  <div class="who d-flex align-items-center">
    <span class="avatar text-center">N</span><a href="#" class="text-nowrap">Nguyễn Thị Thanh Tuyền</a>
  </div>
  <nav>
  <ul class="menu list-unstyled mb-0">
    <li><a href="#" class="d-flex align-items-center"><span class="glyph"><svg class="ico" viewBox="0 0 576 512"><use href="#home"/></svg></span>Home</a></li>
    <li><a href="#" class="d-flex align-items-center"><span class="glyph"><svg class="ico" viewBox="0 0 576 512"><use href="#gauge"/></svg></span>Dashboard<svg class="ico arrow ms-auto" viewBox="0 0 256 512"><use href="#left"/></svg></a></li>
    <li><a href="#" class="d-flex align-items-center"><span class="glyph"><svg class="ico" viewBox="0 0 512 512"><use href="#image"/></svg></span>Media</a></li>
    <li><a href="#" class="d-flex align-items-center opened"><span class="glyph"><svg class="ico" viewBox="0 0 640 512"><use href="#lorry"/></svg></span>EzyDelivery<svg class="ico arrow ms-auto" viewBox="0 0 320 512"><use href="#down"/></svg></a>
      <ul class="sub list-unstyled">
        <li><a href="#" class="d-block"><span class="glyph"><svg class="ico" viewBox="0 0 512 512"><use href="#barcode"/></svg></span>Scan Order Code</a></li>
        <li><a href="#" class="d-block"><span class="glyph"><svg class="ico" viewBox="0 0 384 512"><use href="#invoice"/></svg></span>Declare Order Code</a></li>
        <li><a href="#" class="d-block"><span class="glyph"><svg class="ico" viewBox="0 0 512 512"><use href="#reject"/></svg></span>Rejected Delivery Order Codes</a></li>
        <li><a href="#" class="d-block"><span class="glyph"><svg class="ico" viewBox="0 0 512 512"><use href="#cubes"/></svg></span>Product Packages</a></li>
        <li><a href="#" class="d-block"><span class="glyph"><svg class="ico" viewBox="0 0 640 512"><use href="#shake"/></svg></span>Agencies</a></li>
        <li><a href="#" class="d-block"><span class="glyph"><svg class="ico" viewBox="0 0 640 512"><use href="#pickup"/></svg></span>Vehicles</a></li>
        <li><a href="#" class="d-block"><span class="glyph"><svg class="ico" viewBox="0 0 448 512"><use href="#qr"/></svg></span>Scan Product Package Code</a></li>
        <li><a href="#" class="d-block"><span class="glyph"><svg class="ico" viewBox="0 0 640 512"><use href="#sitemap"/></svg></span>Order Code Allocation</a></li>
        <li><a href="#" class="d-block"><span class="glyph"><svg class="ico" viewBox="0 0 512 512"><use href="#tiles"/></svg></span>Delivery Order Items</a></li>
        <li><a href="#" class="d-block"><span class="glyph"><svg class="ico" viewBox="0 0 512 512"><use href="#search"/></svg></span>Track Delivery Codes</a></li>
        <li><a href="#" class="d-block"><span class="glyph"><svg class="ico" viewBox="0 0 384 512"><use href="#question"/></svg></span>Unknown Customer Orders</a></li>
        <li><a href="#" class="d-block chosen" aria-current="page"><span class="glyph"><svg class="ico" viewBox="0 0 640 512"><use href="#users"/></svg></span>Users</a></li>
        <li><a href="#" class="d-block"><span class="glyph"><svg class="ico" viewBox="0 0 640 512"><use href="#truck"/></svg></span>Delivery Services</a></li>
        <li><a href="#" class="d-block"><span class="glyph"><svg class="ico" viewBox="0 0 512 512"><use href="#tools"/></svg></span>Settings</a></li>
      </ul></li>
    <li><a href="#" class="d-flex align-items-center"><span class="glyph"><svg class="ico" viewBox="0 0 640 512"><use href="#shake"/></svg></span>EzyCRM<svg class="ico arrow ms-auto" viewBox="0 0 256 512"><use href="#left"/></svg></a></li>
    <li><a href="#" class="d-flex align-items-center"><span class="glyph"><svg class="ico" viewBox="0 0 512 512"><use href="#dot"/></svg></span>Shop Now<svg class="ico arrow ms-auto" viewBox="0 0 256 512"><use href="#left"/></svg></a></li>
    <li><a href="#" class="d-flex align-items-center"><span class="glyph"><svg class="ico" viewBox="0 0 576 512"><use href="#basket"/></svg></span>E-Commerce<svg class="ico arrow ms-auto" viewBox="0 0 256 512"><use href="#left"/></svg></a></li>
    <li><a href="#" class="d-flex align-items-center"><span class="glyph"><svg class="ico" viewBox="0 0 512 512"><use href="#mail"/></svg></span>EzyMail<svg class="ico arrow ms-auto" viewBox="0 0 256 512"><use href="#left"/></svg></a></li>
    <li><a href="#" class="d-flex align-items-center"><span class="glyph"><svg class="ico" viewBox="0 0 448 512"><use href="#calc"/></svg></span>Accounting<svg class="ico arrow ms-auto" viewBox="0 0 256 512"><use href="#left"/></svg></a></li>
    <li><a href="#" class="d-flex align-items-center"><span class="glyph"><svg class="ico" viewBox="0 0 512 512"><use href="#ring"/></svg></span>EzySupport<svg class="ico arrow ms-auto" viewBox="0 0 256 512"><use href="#left"/></svg></a></li>
    <li><a href="#" class="d-flex align-items-center"><span class="glyph"><svg class="ico" viewBox="0 0 576 512"><use href="#news"/></svg></span>Posts<svg class="ico arrow ms-auto" viewBox="0 0 256 512"><use href="#left"/></svg></a></li>
  </ul>
  </nav>
</aside>

<div class="flex-grow-1 overflow-hidden">
  <header class="topbar d-flex align-items-center">
    <button type="button" aria-label="Toggle menu"><svg class="ico" viewBox="0 0 448 512"><use href="#bars"/></svg></button>
    <a href="#">Home</a>
    <a href="#">Contact</a>
    <button type="button" class="ms-auto" aria-label="Language"><svg class="ico" viewBox="0 0 496 512"><use href="#globe"/></svg></button>
    <button type="button" aria-label="Search"><svg class="ico" viewBox="0 0 512 512"><use href="#search"/></svg></button>
    <button type="button" aria-label="Messages"><svg class="ico" viewBox="0 0 576 512"><use href="#chat"/></svg></button>
    <button type="button" aria-label="Notifications"><svg class="ico" viewBox="0 0 448 512"><use href="#bell-o"/></svg></button>
    <button type="button" aria-label="Full screen"><svg class="ico" viewBox="0 0 448 512"><use href="#expand"/></svg></button>
    <button type="button" aria-label="Apps"><svg class="ico" viewBox="0 0 512 512"><use href="#tiles"/></svg></button>
  </header>

  <main class="page">
    <div class="d-flex align-items-start">
      <h1>Users</h1>
      <button type="button" class="btn btn-add">Add New <svg class="ico" viewBox="0 0 512 512"><use href="#plus"/></svg></button>
      <nav class="ms-auto" aria-label="breadcrumb">
        <ol class="breadcrumb crumbs mb-0">
          <li class="breadcrumb-item"><a href="#">EzyDelivery</a></li>
          <li class="breadcrumb-item active" aria-current="page">Users</li>
        </ol>
      </nav>
    </div>
    <p class="debt"><strong>Total Debt:</strong> <span class="red">440,000 VND</span></p>
    <form class="row filters justify-content-end">
      <div class="col-3 d-flex align-items-center gap-2">
        <label for="kw">Search:</label><input id="kw" type="text" class="form-control" placeholder="Keyword">
      </div>
      <div class="col-3 d-flex align-items-center gap-2">
        <label for="sort" class="text-nowrap">Sort Order:</label><select id="sort"><option>Default</option></select>
      </div>
    </form>

    <section class="panel">
      <table class="grid-users">
        <thead><tr><th class="c1 text-center">#</th><th class="c2">Customer Code</th><th class="c3">Phone</th><th class="c4 text-center">Default Shipping Rate / 1Kg</th><th class="c5">Total Accounts Receivable</th><th class="c6 text-center">Latest Payment At</th><th class="text-center">Actions</th></tr></thead>
        <tbody>
        <tr><td class="text-center">1</td><td><a href="#">333</a></td><td></td><td class="text-center">20,000 VND<button type="button" class="act" aria-label="Edit rate"><svg class="ico" viewBox="0 0 576 512"><use href="#edit"/></svg></button></td><td>0 VND</td><td></td><td><div class="d-flex justify-content-center"><button type="button" class="act act-eye" aria-label="View"><svg class="ico" viewBox="0 0 576 512"><use href="#eye"/></svg></button><button type="button" class="act" aria-label="Edit"><svg class="ico" viewBox="0 0 576 512"><use href="#edit"/></svg></button><button type="button" class="act act-bell" aria-label="Notify"><svg class="ico" viewBox="0 0 448 512"><use href="#bell"/></svg></button></div></td></tr>
        <tr><td class="text-center red">2</td><td><a href="#">888</a></td><td><a href="#">0856014779</a></td><td class="text-center red">20,000 VND<button type="button" class="act" aria-label="Edit rate"><svg class="ico" viewBox="0 0 576 512"><use href="#edit"/></svg></button></td><td class="red">220,000 VND</td><td></td><td><div class="d-flex justify-content-center"><button type="button" class="act act-eye" aria-label="View"><svg class="ico" viewBox="0 0 576 512"><use href="#eye"/></svg></button><button type="button" class="act" aria-label="Edit"><svg class="ico" viewBox="0 0 576 512"><use href="#edit"/></svg></button><button type="button" class="act act-bell" aria-label="Notify"><svg class="ico" viewBox="0 0 448 512"><use href="#bell"/></svg></button></div></td></tr>
        <tr class="hovered"><td class="text-center">3</td><td><a href="#">Unknown Customer</a></td><td></td><td class="text-center">20,000 VND<button type="button" class="act" aria-label="Edit rate"><svg class="ico" viewBox="0 0 576 512"><use href="#edit"/></svg></button></td><td>0 VND</td><td></td><td><div class="d-flex justify-content-center"><button type="button" class="act act-eye" aria-label="View"><svg class="ico" viewBox="0 0 576 512"><use href="#eye"/></svg></button><button type="button" class="act" aria-label="Edit"><svg class="ico" viewBox="0 0 576 512"><use href="#edit"/></svg></button><button type="button" class="act act-bell" aria-label="Notify"><svg class="ico" viewBox="0 0 448 512"><use href="#bell"/></svg></button></div></td></tr>
        <tr><td class="text-center red">4</td><td><a href="#">UnknownUser4</a></td><td></td><td class="text-center red">22,000 VND<button type="button" class="act" aria-label="Edit rate"><svg class="ico" viewBox="0 0 576 512"><use href="#edit"/></svg></button></td><td class="red">220,000 VND</td><td></td><td><div class="d-flex justify-content-center"><button type="button" class="act act-eye" aria-label="View"><svg class="ico" viewBox="0 0 576 512"><use href="#eye"/></svg></button><button type="button" class="act" aria-label="Edit"><svg class="ico" viewBox="0 0 576 512"><use href="#edit"/></svg></button><button type="button" class="act act-bell" aria-label="Notify"><svg class="ico" viewBox="0 0 448 512"><use href="#bell"/></svg></button></div></td></tr>
        <tr><td class="text-center">5</td><td><a href="#">UnknownUser3</a></td><td></td><td class="text-center">20,000 VND<button type="button" class="act" aria-label="Edit rate"><svg class="ico" viewBox="0 0 576 512"><use href="#edit"/></svg></button></td><td>0 VND</td><td></td><td><div class="d-flex justify-content-center"><button type="button" class="act act-eye" aria-label="View"><svg class="ico" viewBox="0 0 576 512"><use href="#eye"/></svg></button><button type="button" class="act" aria-label="Edit"><svg class="ico" viewBox="0 0 576 512"><use href="#edit"/></svg></button><button type="button" class="act act-bell" aria-label="Notify"><svg class="ico" viewBox="0 0 448 512"><use href="#bell"/></svg></button></div></td></tr>
        <tr><td class="text-center">6</td><td><a href="#">UnknownUser2</a></td><td></td><td class="text-center">20,000 VND<button type="button" class="act" aria-label="Edit rate"><svg class="ico" viewBox="0 0 576 512"><use href="#edit"/></svg></button></td><td>0 VND</td><td></td><td><div class="d-flex justify-content-center"><button type="button" class="act act-eye" aria-label="View"><svg class="ico" viewBox="0 0 576 512"><use href="#eye"/></svg></button><button type="button" class="act" aria-label="Edit"><svg class="ico" viewBox="0 0 576 512"><use href="#edit"/></svg></button><button type="button" class="act act-bell" aria-label="Notify"><svg class="ico" viewBox="0 0 448 512"><use href="#bell"/></svg></button></div></td></tr>
        <tr><td class="text-center">7</td><td><a href="#">UnknownUser1</a></td><td></td><td class="text-center">20,000 VND<button type="button" class="act" aria-label="Edit rate"><svg class="ico" viewBox="0 0 576 512"><use href="#edit"/></svg></button></td><td>0 VND</td><td></td><td><div class="d-flex justify-content-center"><button type="button" class="act act-eye" aria-label="View"><svg class="ico" viewBox="0 0 576 512"><use href="#eye"/></svg></button><button type="button" class="act" aria-label="Edit"><svg class="ico" viewBox="0 0 576 512"><use href="#edit"/></svg></button><button type="button" class="act act-bell" aria-label="Notify"><svg class="ico" viewBox="0 0 448 512"><use href="#bell"/></svg></button></div></td></tr>
        </tbody>
      </table>
      <div class="foot d-flex justify-content-between">
        <span>7 of 7 users</span>
        <ul class="pagination pager mb-0">
          <li class="page-item"><a class="page-link end" href="#" aria-label="First"><svg class="ico" viewBox="0 0 512 512"><use href="#go-left"/></svg></a></li>
          <li class="page-item"><a class="page-link" href="#">Prev</a></li>
          <li class="page-item"><a class="page-link" href="#">Next</a></li>
          <li class="page-item"><a class="page-link end" href="#" aria-label="Last"><svg class="ico" viewBox="0 0 512 512"><use href="#go-left" transform="translate(512 0) scale(-1 1)"/></svg></a></li>
        </ul>
      </div>
    </section>
  </main>
</div>

<div class="bar flex-shrink-0 d-flex flex-column align-items-center" aria-hidden="true">
  <svg viewBox="0 0 9 7"><path d="M4.500 0 9 7H0z"/></svg>
  <div class="thumb"></div>
  <svg viewBox="0 0 9 7"><path d="M4.500 7 9 0H0z"/></svg>
</div>
</div>
<script src="https://cdn.jsdelivr.net/npm/bootstrap@5.3.0/dist/js/bootstrap.bundle.min.js"></script>
</body>
</html>
